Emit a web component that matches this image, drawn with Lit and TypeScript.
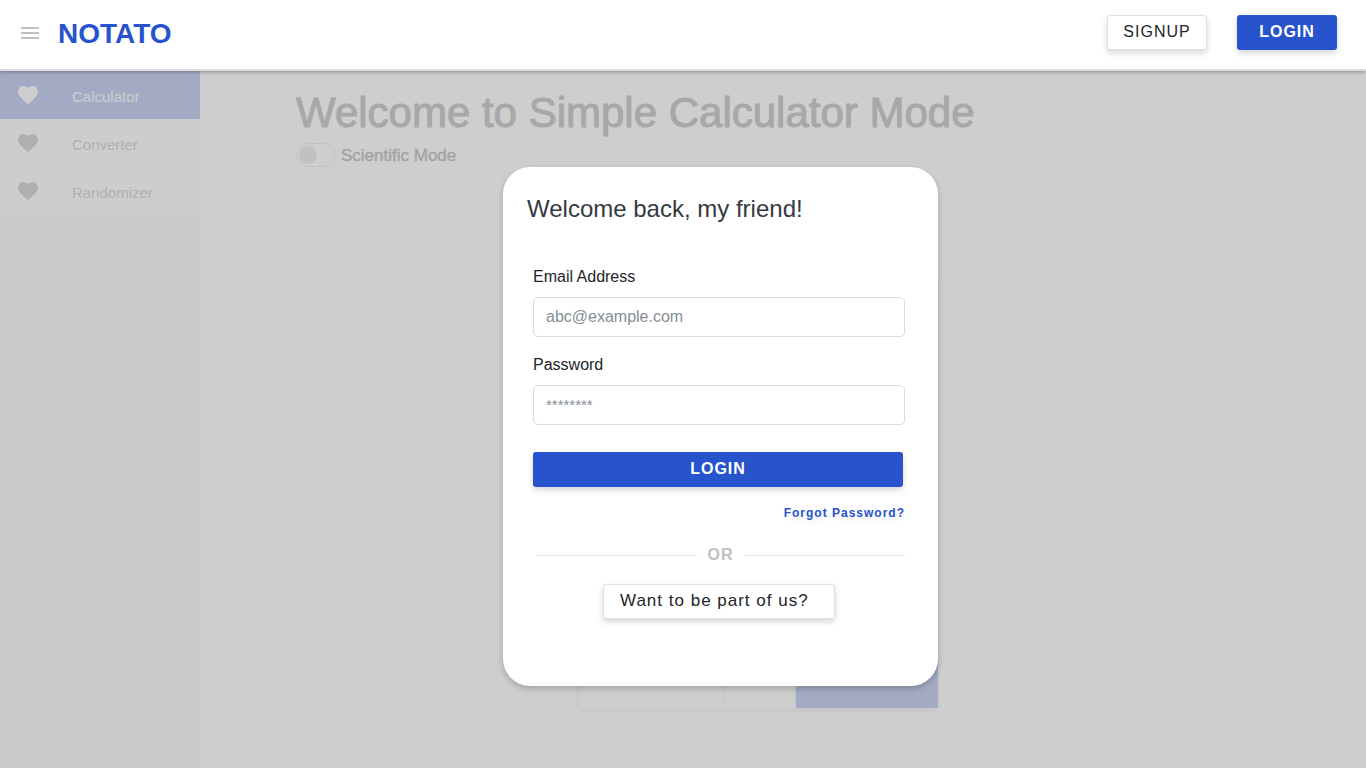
import { LitElement, html, css, svg } from "lit";
import { customElement } from "lit/decorators.js";
import { classMap } from "lit/directives/class-map.js";

const heart = svg`<path d="M12 21.35l-1.45-1.32C5.4 15.36 2 12.28 2 8.5 2 5.42 4.42 3 7.5 3c1.74 0 3.41.81 4.5 2.09C13.09 3.81 14.76 3 16.5 3 19.58 3 22 5.42 22 8.5c0 3.78-3.4 6.86-8.55 11.54L12 21.35z"/>`;

@customElement("app-root")
export class AppRoot extends LitElement {
  static styles = css`
    :host {
      display: flex;
      flex-direction: column;
      position: relative;
      min-height: 100vh;
      background: #cecece;
      font-family: "Liberation Sans", Arial, sans-serif;
      font-size: 16px;
      color: #212529;
    }
    * {
      box-sizing: border-box;
    }
    button,
    input {
      font: inherit;
      color: inherit;
    }
    header {
      display: flex;
      align-items: center;
      height: 71px;
      padding: 0 29px 4px 18px;
      background: #fff;
      border-bottom: 2px solid #dcdcdc;
      box-shadow: 0 1px 4px rgba(0, 0, 0, 0.3);
      z-index: 1;
    }
    .menu {
      display: flex;
      padding: 0;
      border: 0;
      background: none;
    }
    .menu svg {
      fill: #c0c0c0;
    }
    .logo {
      margin-left: 16px;
      padding-top: 2px;
      font-size: 28px;
      line-height: 32px;
      font-weight: 700;
      color: #2754cc;
      text-decoration: none;
    }
    .actions {
      display: flex;
      gap: 30px;
      margin-left: auto;
    }
    .btn {
      height: 35px;
      padding: 0 0 2px;
      border: 0;
      border-radius: 3px;
      letter-spacing: 1px;
      box-shadow: 0 3px 6px rgba(0, 0, 0, 0.16);
    }
    .actions .btn {
      width: 100px;
    }
    .primary {
      background: #2754cc;
      color: #fff;
      font-weight: 700;
    }
    .plain {
      background: #fff;
      border: 1px solid #e0e0e0;
    }
    .body {
      display: flex;
      flex: 1;
    }
    nav {
      width: 200px;
      background: #c9c9c9;
    }
    .item {
      display: flex;
      align-items: center;
      gap: 32px;
      height: 48px;
      padding: 2px 16px 0;
      font-size: 15px;
      color: #b0b0b0;
      fill: #b0b0b0;
      background: #cdcdcd;
      text-decoration: none;
    }
    .item svg {
      margin-bottom: 2px;
    }
    .item.active {
      color: #cecece;
      fill: #cecece;
      background: #a3abc4;
    }
    main {
      flex: 1;
      padding: 18px 144px 0 96px;
    }
    h1 {
      margin: 0;
      font-size: 42px;
      line-height: 48px;
      font-weight: 400;
      color: #a6a8a9;
      -webkit-text-stroke: 1px #a6a8a9;
    }
    .mode {
      display: flex;
      align-items: center;
      gap: 6px;
      margin-top: 6px;
      font-size: 17px;
      color: #a3a3a3;
      -webkit-text-stroke: 0.4px #a3a3a3;
    }
    .mode label {
      padding-top: 2px;
      line-height: 22px;
    }
    .mode input {
      appearance: none;
      display: flex;
      width: 39px;
      height: 24px;
      margin: 0;
      padding: 2px;
      border: 1px solid #c2c2c2;
      border-radius: 12px;
    }
    .mode input::before {
      content: "";
      width: 18px;
      height: 18px;
      border-radius: 50%;
      background: #c0c0c0;
    }
    .calc {
      display: grid;
      grid-template-columns: repeat(5, 70px);
      grid-template-rows: 358px 70px;
      gap: 2px;
      width: 358px;
      margin: 111px auto 0;
      background: #cacaca;
      box-shadow: 0 3px 6px rgba(0, 0, 0, 0.04);
    }
    .calc div {
      background: #cecece;
    }
    .calc .screen {
      grid-column: span 5;
    }
    .calc .wide {
      grid-column: span 2;
    }
    .calc .equals {
      background: #a3abc4;
    }
    .overlay {
      position: absolute;
      inset: 0;
      display: flex;
      justify-content: center;
      align-items: flex-start;
      padding: 167px 0 0 75px;
    }
    .dialog {
      width: 435px;
      padding: 26px 33px 67px 24px;
      border-radius: 27px;
      background: #fff;
      box-shadow: 0 3px 6px rgba(0, 0, 0, 0.2);
    }
    h2 {
      margin: 0 0 40px;
      font-size: 24px;
      line-height: 32px;
      font-weight: 400;
      color: #343a40;
    }
    form {
      display: flex;
      flex-direction: column;
      padding-left: 6px;
    }
    label {
      line-height: 24px;
    }
    .field {
      height: 40px;
      margin: 8px 0 16px;
      padding: 0 12px;
      border: 1px solid #dcdcde;
      border-radius: 5px;
      background: #fff;
    }
    .field::placeholder {
      color: #868e96;
      opacity: 1;
    }
    .field[type="password"]::placeholder {
      font-size: 15px;
    }
    .submit {
      margin: 11px 2px 0 0;
    }
    .forgot {
      align-self: flex-end;
      margin-top: 18px;
      font-size: 12px;
      line-height: 16px;
      font-weight: 700;
      letter-spacing: 1px;
      color: #2754cc;
      text-decoration: none;
      text-shadow: 0 3px 6px rgba(0, 0, 0, 0.1);
    }
    .or {
      display: flex;
      align-items: center;
      gap: 11px;
      margin: 22px 0 17px 3px;
      line-height: 24px;
      font-weight: 700;
      letter-spacing: 1px;
      color: #c0c0c0;
    }
    .or::before,
    .or::after {
      content: "";
      flex: 1;
      height: 1px;
      background: #e2e2e2;
    }
    .join {
      align-self: center;
      width: 232px;
      padding: 0 26px 2px 16px;
      font-size: 17px;
      text-align: left;
      white-space: nowrap;
    }
  `;

  private items = ["Calculator", "Converter", "Randomizer"];

  render() {
    return html`
      <header>
        <button class="menu" aria-label="Menu">
          <svg width="24" height="24" viewBox="0 0 24 24">
            <path d="M3 18h18v-2H3v2zm0-5h18v-2H3v2zm0-7v2h18V6H3z" />
          </svg>
        </button>
        <a class="logo" href="#">NOTATO</a>
        <div class="actions">
          <button class="btn plain">SIGNUP</button>
          <button class="btn primary">LOGIN</button>
        </div>
      </header>
      <div class="body">
        <nav>
          ${this.items.map(
            (name, i) => html`
              <a class=${classMap({ item: true, active: i === 0 })} href="#">
                <svg width="24" height="24" viewBox="0 0 24 24">${heart}</svg>
                <span>${name}</span>
              </a>
            `
          )}
        </nav>
        <main>
          <h1>Welcome to Simple Calculator Mode</h1>
          <div class="mode">
            <input type="checkbox" id="scientific" />
            <label for="scientific">Scientific Mode</label>
          </div>
          <div class="calc">
            <div class="screen"></div>
            <div class="wide"></div>
            <div></div>
            <div class="wide equals"></div>
          </div>
        </main>
      </div>
      <div class="overlay">
        <section class="dialog" role="dialog" aria-labelledby="title">
          <h2 id="title">Welcome back, my friend!</h2>
          <form>
            <label for="email">Email Address</label>
            <input class="field" id="email" type="email" placeholder="abc@example.com" />
            <label for="password">Password</label>
            <input class="field" id="password" type="password" placeholder="********" />
            <button class="btn primary submit" type="button">LOGIN</button>
            <a class="forgot" href="#">Forgot Password?</a>
            <div class="or">OR</div>
            <button class="btn plain join" type="button">Want to be part of us?</button>
          </form>
        </section>
      </div>
    `;
  }
}
